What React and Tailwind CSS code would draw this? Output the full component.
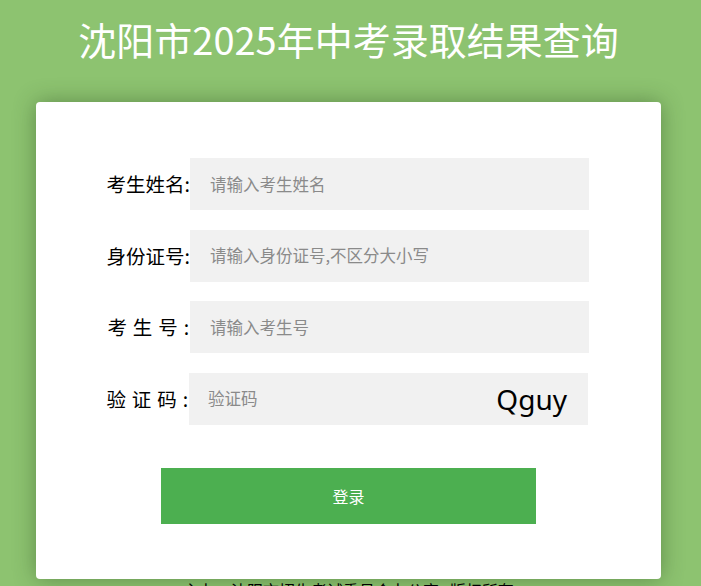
export default function App() {
  const cjk = { fontFamily: '"Noto Sans CJK SC", "Noto Sans", sans-serif' };
  const rows = [
    { label: "考生姓名:", ph: "请输入考生姓名", sp: "" },
    { label: "身份证号:", ph: "请输入身份证号,不区分大小写", sp: "" },
    { label: "考 生 号 :", ph: "请输入考生号", sp: "tracking-[0.8px]" },
  ];
  return (
    <div className="w-[701px] h-[586px] overflow-hidden bg-[#8dc370]" style={cjk}>
      <div className="w-[697px] flex flex-col items-center">
        <h1 className="mt-[13px] h-[60px] text-[38px] leading-[52px] text-white font-normal">
          沈阳市2025年中考录取结果查询
        </h1>
        <div className="mt-[29px] w-[625px] h-[477px] shrink-0 bg-white rounded-[4px] shadow-[0_0_22px_rgba(40,70,30,0.45)] pt-[56px] flex flex-col">
          {rows.map((r, i) => (
            <div key={i} className="flex items-center h-[52px] mb-[19.5px]">
              <div className={"w-[154px] text-right text-[19.5px] text-black leading-none whitespace-pre " + r.sp}>{r.label}</div>
              <div className="w-[399px] h-[52px] bg-[#f1f1f1] flex items-center pl-[20px] text-[16.5px] text-[#8a8a8a]">
                {r.ph}
              </div>
            </div>
          ))}
          <div className="flex items-center h-[52px]">
            <div className="w-[153px] text-right text-[19.5px] text-black leading-none whitespace-pre tracking-[0.8px]">验 证 码 :</div>
            <div className="w-[399px] h-[52px] bg-[#f1f1f1] flex items-center justify-between pl-[19px] pr-[21px]">
              <span className="text-[16.5px] text-[#8a8a8a]">验证码</span>
              <span className="text-[28px] text-black" style={{ fontFamily: '"Noto Sans", "Open Sans", sans-serif' }}>Qguy</span>
            </div>
          </div>
          <div className="mt-[43px] ml-[125px] w-[375px] h-[56px] bg-[#4caf50] flex items-center justify-center text-white text-[16px]">
            登录
          </div>
        </div>
        <div className="mt-[1px] text-[16px] text-black whitespace-pre leading-[20px]">
          主办：沈阳市招生考试委员会办公室   版权所有
        </div>
      </div>
    </div>
  );
}
